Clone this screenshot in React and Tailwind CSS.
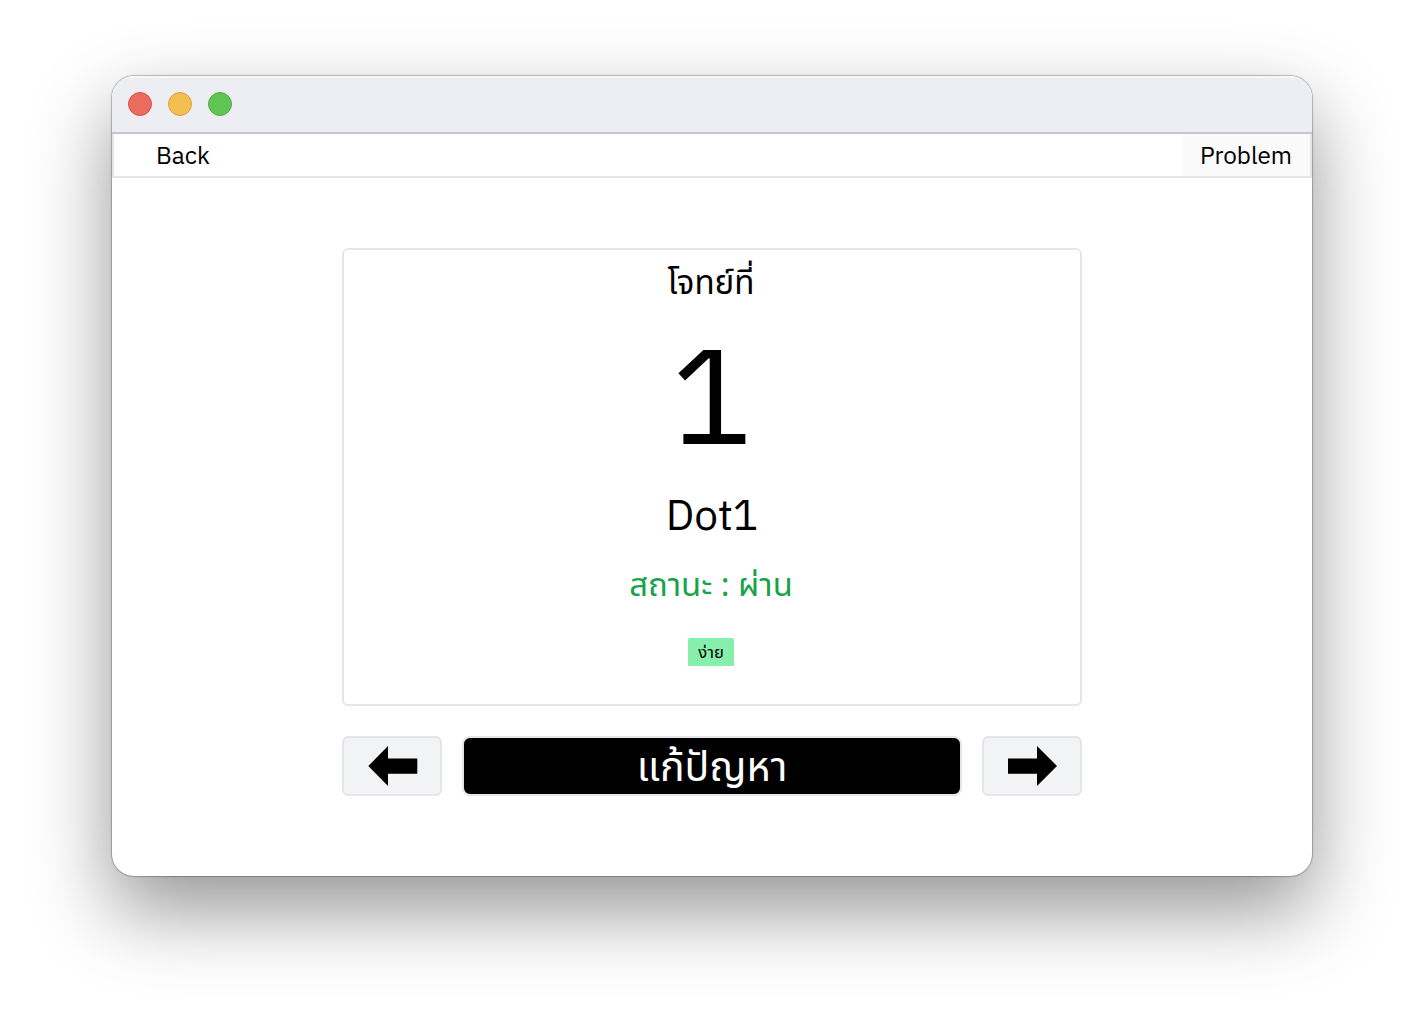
function Arrow({ right }) {
  return (
    <svg width="50" height="40" viewBox="0 0 50 40" className={right ? "" : "ml-0.5"}>
      <path
        d={right ? "M50 20 30 0V12.5H1V27.7H30V40Z" : "M0.3 20 20 0V12.5H49.3V27.7H20V40Z"}
        fill="#000"
      />
    </svg>
  );
}

function NavButton({ right, label }) {
  return (
    <button aria-label={label} className="flex h-[60px] w-[100px] items-center justify-center rounded-md border-2 border-[#e5e5ea] bg-[#f2f3f5]">
      <Arrow right={right} />
    </button>
  );
}

export default function App() {
  return (
    <div className="h-[1024px] w-[1424px] overflow-hidden bg-white pl-[112px] pt-[76px] font-['IBM_Plex_Sans_Thai','Noto_Sans',sans-serif] text-black">
      <div className="h-[800px] w-[1200px] overflow-hidden rounded-[22px] bg-white shadow-[0_0_1px_1px_rgba(0,0,0,0.25),0_34px_80px_0_rgba(0,0,0,0.42)]">
        <header className="flex h-[58px] items-center gap-4 border-b-2 border-[#c6c7cd] bg-[#edeef3] pl-4 shadow-[inset_0_2px_0_#f6f6f9]">
          <span className="size-6 rounded-full border border-[#d95448] bg-[#ec6a5e]" />
          <span className="size-6 rounded-full border border-[#d9a03d] bg-[#f5bf4f]" />
          <span className="size-6 rounded-full border border-[#51aa42] bg-[#61c554]" />
        </header>
        <nav className="flex h-11 items-stretch justify-between border-x-2 border-b-2 border-[#e5e5ea] text-[24.3px] leading-[38px]">
          <span className="pl-[42px] pt-1">Back</span>
          <span className="w-32 bg-neutral-50 pt-1 text-center">Problem</span>
        </nav>
        <main className="mx-auto w-[740px] pt-[70px]">
          <section className="flex h-[458px] flex-col items-center rounded-md border-2 border-[#e5e5ea]">
            <div className="mr-0.5 mt-2.5 h-12 font-['Noto_Sans_Thai','Noto_Sans',sans-serif] text-[33.2px] leading-[48px]">โจทย์ที่</div>
            <div className="mt-[33px] h-32 text-[135px] leading-[128px]">1</div>
            <div className="mt-[19px] h-[60px] text-[42.5px] leading-[60px]">Dot1</div>
            <div className="mr-0.5 mt-3.5 h-12 font-['Noto_Sans_Thai','Noto_Sans',sans-serif] text-[32.8px] leading-[48px] text-[#16a34a]">สถานะ : ผ่าน</div>
            <div className="mr-0.5 mt-7 h-7 w-[46px] rounded-t-xs bg-[#86efac] pt-px text-center font-['Noto_Sans_Thai','Noto_Sans',sans-serif] text-[16.6px] leading-7">ง่าย</div>
          </section>
          <div className="mt-[30px] flex justify-between">
            <NavButton label="Previous" />
            <button className="h-[60px] w-[500px] rounded-lg border-2 border-[#e5e5ea] bg-black pt-1 font-['Noto_Sans_Thai','Noto_Sans',sans-serif] text-[41px] leading-[52px] text-white">แก้ปัญหา</button>
            <NavButton right label="Next" />
          </div>
        </main>
      </div>
    </div>
  );
}
